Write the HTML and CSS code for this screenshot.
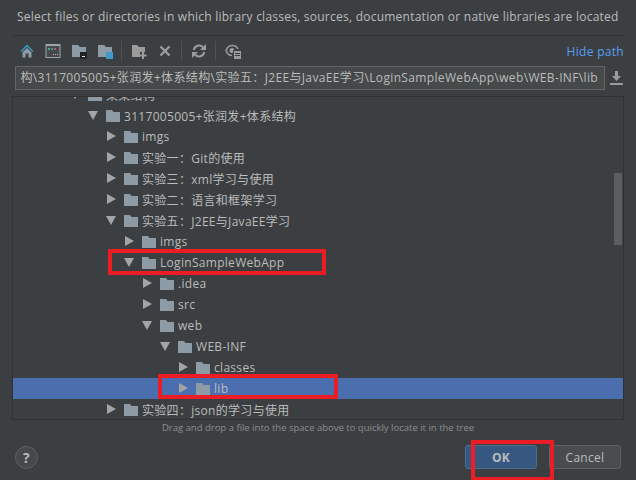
FILE: index.html
```html
<!DOCTYPE html>
<html>
<head>
    <link rel="stylesheet" href="styles.css">
</head>
<body>

<div class="dialog">
    <div class="title">Select files or directories in which library classes, sources, documentation or native libraries are located</div>

    <!-- Toolbar -->
    <div class="toolbar">
        <span class="tool"><svg width="16" height="16" viewBox="0 0 16 16"><path d="M8 1.500 1.500 8l1 .9L8 3.600l5.500 5.300 1-.9z" fill="#3e9ac6"/><path d="M3.500 9.200 8 5l4.500 4.200V14.500H9.500V10.500H6.500V14.500H3.500z" fill="#8c9ba5"/></svg></span>
        <span class="tool"><svg width="16" height="16" viewBox="0 0 16 16"><rect x="1" y="1.500" width="14" height="13" fill="#46494b" stroke="#9aa7b0"/><rect x="1" y="1" width="14" height="2" fill="#9aa7b0"/><rect x="3" y="5" width="2" height="2" fill="#59a869"/><rect x="6" y="5" width="2" height="2" fill="#3592c4"/><rect x="9" y="5" width="2" height="2" fill="#c75450"/><path d="M8 11h1v1H8zM10 11h1v1h-1zM12 11h1v1h-1z" fill="#bbb"/></svg></span>
        <span class="tool"><svg width="16" height="16" viewBox="0 0 16 16"><path d="M1 2h6l2 2h6v10H1z" fill="#8c9ba5"/><rect x="9" y="9" width="7" height="7" fill="#222"/><rect x="11" y="13" width="3" height="1" fill="#ddd"/></svg></span>
        <span class="tool"><svg width="16" height="16" viewBox="0 0 16 16"><path d="M1 2h6l2 2h6v10H1z" fill="#8c9ba5"/><rect x="9" y="9" width="7" height="7" fill="#3e9ac6"/></svg></span>
        <span class="divider"></span>
        <span class="tool"><svg width="16" height="16" viewBox="0 0 16 16"><path d="M1 2h5l2 2h6v5H9v5H1z" fill="#9b9b9b"/><path d="M11 9h2v2.500h2.500v2H13V16h-2v-2.500H8.500v-2H11z" fill="#9b9b9b"/></svg></span>
        <span class="tool"><svg width="16" height="16" viewBox="0 0 16 16"><path d="M3.500 3.500l9 9M12.500 3.500l-9 9" stroke="#9b9b9b" stroke-width="2.400" fill="none"/></svg></span>
        <span class="divider"></span>
        <span class="tool"><svg width="16" height="16" viewBox="0 0 16 16"><path d="M2.800 7A5.300 5.300 0 0 1 12 4.300" stroke="#9b9b9b" stroke-width="2" fill="none"/><path d="M9 7h6V1z" fill="#9b9b9b"/><path d="M13.200 9A5.300 5.300 0 0 1 4 11.700" stroke="#9b9b9b" stroke-width="2" fill="none"/><path d="M7 9H1v6z" fill="#9b9b9b"/></svg></span>
        <span class="divider"></span>
        <span class="tool"><svg width="16" height="16" viewBox="0 0 16 16"><path d="M7 12.500C4 12.500 2 10 1 7.500 2 4.500 4.500 2.500 7.500 2.500c2.500 0 4.500 1.500 5.500 3.500" stroke="#9b9b9b" stroke-width="1.600" fill="none"/><circle cx="7" cy="7.500" r="2.500" fill="#9b9b9b"/><rect x="8" y="7" width="8" height="9" fill="#3c3f41"/><rect x="9" y="8" width="7" height="8" fill="#9b9b9b"/><path d="M10 10.500h5M10 12.500h5" stroke="#3c3f41"/></svg></span>
        <span class="hide-path">Hide path</span>
    </div>

    <!-- Path field -->
    <div class="path-row">
        <div class="path-field">构\3117005005+张润发+体系结构\实验五：J2EE与JavaEE学习\LoginSampleWebApp\web\WEB-INF\lib</div>
        <svg class="path-save" width="13" height="14" viewBox="0 0 13 14"><path d="M5 0h3v5h3L6.500 10 2 5h3zM0 12h13v2H0z" fill="#9b9b9b"/></svg>
    </div>

    <!-- Tree -->
    <div class="tree">
        <div class="tree-list" id="treeList"></div>
        <div class="scroll-thumb"></div>
    </div>

    <div class="hint">Drag and drop a file into the space above to quickly locate it in the tree</div>

    <!-- Buttons -->
    <div class="footer">
        <span class="help">?</span>
        <div class="buttons">
            <button class="btn btn-ok">OK</button>
            <button class="btn">Cancel</button>
        </div>
    </div>

    <!-- Red annotation boxes -->
    <div class="mark mark-app"></div>
    <div class="mark mark-lib"></div>
    <div class="mark mark-ok"></div>
</div>

<script>
var rows = [
    { d: 0, open: true, name: "某某结构" },
    { d: 1, open: true, name: "3117005005+张润发+体系结构" },
    { d: 2, name: "imgs" },
    { d: 2, name: "实验一：Git的使用" },
    { d: 2, name: "实验三：xml学习与使用" },
    { d: 2, name: "实验二：语言和框架学习" },
    { d: 2, open: true, name: "实验五：J2EE与JavaEE学习" },
    { d: 3, name: "imgs" },
    { d: 3, open: true, name: "LoginSampleWebApp" },
    { d: 4, name: ".idea" },
    { d: 4, name: "src" },
    { d: 4, open: true, name: "web" },
    { d: 5, open: true, name: "WEB-INF" },
    { d: 6, name: "classes" },
    { d: 6, name: "lib", selected: true },
    { d: 2, name: "实验四：json的学习与使用" }
];

var html = '';
for (var i = 0; i < rows.length; i++) {
    var r = rows[i];
    var arrow = r.open ? '<path d="M0 1h10L5 10z"/>' : '<path d="M1 0l9 5-9 5z"/>';
    html += '<div class="row' + (r.selected ? ' selected' : '') + '" style="padding-left:' + (57 + r.d * 18) + 'px">' +
        '<svg class="arrow" width="10" height="11" viewBox="0 0 10 11">' + arrow + '</svg>' +
        '<svg class="folder" width="14" height="12" viewBox="0 0 14 12"><path d="M0 0h6l1.500 2H14v10H0z"/></svg>' +
        '<span>' + r.name + '</span></div>';
}
document.getElementById('treeList').innerHTML = html;
</script>

</body>
</html>
```

FILE: styles.css
```css
body {
    margin: 0;
    background-color: #3c3f41;
    color: #bbbbbb;
    font-family: "Open Sans", "Noto Sans CJK SC", sans-serif;
    font-size: 12px;
    letter-spacing: 0.3px;
}

.dialog {
    width: 636px;
    height: 480px;
    overflow: hidden;
    box-sizing: border-box;
    padding: 0 12px;
    position: relative;
}

.title {
    height: 35px;
    line-height: 34px;
    padding-left: 5px;
    white-space: nowrap;
    letter-spacing: 0.24px;
    border-bottom: 1px solid #323232;
}

.toolbar {
    height: 30px;
    display: flex;
    align-items: center;
    padding-left: 2px;
}

.tool {
    width: 26px;
    height: 16px;
    display: flex;
    justify-content: center;
}

.divider {
    width: 1px;
    height: 20px;
    margin: 0 4px 0 3px;
    background-color: #515151;
}

.hide-path {
    margin-left: auto;
    color: #589df6;
}

.path-row {
    display: flex;
    align-items: center;
    margin-left: 3px;
    height: 24px;
}

.path-field {
    width: 590px;
    height: 24px;
    box-sizing: border-box;
    border: 1px solid #646464;
    background-color: #45494a;
    padding: 0 6px 0 4px;
    line-height: 22px;
    white-space: nowrap;
    letter-spacing: 0.35px;
    overflow: hidden;
    display: flex;
    justify-content: flex-end;
}

.path-save {
    margin-left: 5px;
}

.tree {
    margin-top: 6px;
    height: 324px;
    box-sizing: border-box;
    border: 1px solid #323232;
    overflow: hidden;
    position: relative;
}

.tree-list {
    margin-top: -13px;
}

.row {
    height: 21px;
    display: flex;
    align-items: center;
    white-space: nowrap;
}

.row.selected {
    background-color: #4b6eaf;
}

.arrow {
    fill: #a4a4a4;
    margin-right: 8px;
}

.folder {
    fill: #8c9ba5;
    margin-right: 4px;
}

.scroll-thumb {
    position: absolute;
    right: 1px;
    top: 76px;
    width: 8px;
    height: 72px;
    background-color: #5c5e60;
}

.hint {
    height: 16px;
    line-height: 16px;
    text-align: center;
    font-size: 9.500px;
    letter-spacing: 0;
    color: #8c8c8c;
}

.footer {
    display: flex;
    align-items: center;
    justify-content: space-between;
    margin-top: 9px;
    padding: 0 3px;
}

.help {
    width: 23px;
    height: 23px;
    box-sizing: border-box;
    border: 1px solid #5e6060;
    border-radius: 50%;
    background-color: #46494b;
    text-align: center;
    line-height: 21px;
    font-weight: bold;
    font-size: 14px;
}

.buttons {
    display: flex;
    gap: 12px;
}

.btn {
    width: 72px;
    height: 24px;
    padding: 0;
    border: 1px solid #5e6060;
    border-radius: 3px;
    background-color: #494c4e;
    color: #bbbbbb;
    font-family: inherit;
    font-size: 12px;
    letter-spacing: 0.3px;
}

.btn-ok {
    border-color: #4c708c;
    background-color: #365880;
    font-weight: bold;
}

.mark {
    position: absolute;
    box-sizing: border-box;
    border: 4px solid #ec1c24;
}

.mark-app {
    left: 108px;
    top: 249px;
    width: 218px;
    height: 26px;
}

.mark-lib {
    left: 158px;
    top: 374px;
    width: 180px;
    height: 25px;
}

.mark-ok {
    left: 471px;
    top: 440px;
    width: 83px;
    height: 41px;
}
```
